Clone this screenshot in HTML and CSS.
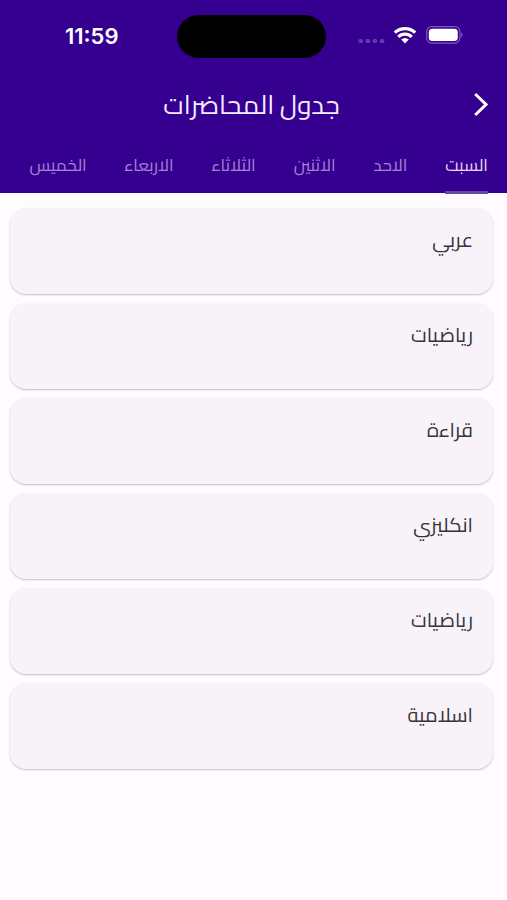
FILE: index.html
```html
<!DOCTYPE html>
<html lang="ar" dir="rtl">
<head>
<meta charset="utf-8">
<title>جدول المحاضرات</title>
<link rel="stylesheet" href="styles.css">
</head>
<body>
<header class="header">
  <div class="status" dir="ltr">
    <span class="time">11:59</span>
    <span class="island"></span>
    <div class="indicators">
      <svg class="dots" width="27" height="6" viewBox="0 0 27 6"><g fill="#6438ad"><rect x="0.5" y="1" width="4.5" height="4" rx="1.5"/><rect x="7.6" y="1" width="4.5" height="4" rx="1.5"/><rect x="14.7" y="1" width="4.5" height="4" rx="1.5"/><rect x="21.8" y="1" width="4.5" height="4" rx="1.5"/></g></svg>
      <svg class="wifi" width="24" height="18" viewBox="0 0 24 18"><g fill="none" stroke="#fff" stroke-width="3.2"><path d="M1.8 6.7A15 15 0 0 1 22.2 6.7"/><path d="M5.3 10.8A9.7 9.7 0 0 1 18.7 10.8"/></g><path d="M8.2 13.6Q12 10.5 15.8 13.6L12 17.4Z" fill="#fff"/></svg>
      <svg class="battery" width="38" height="18" viewBox="0 0 38 18"><rect x="0.7" y="0.7" width="33.2" height="16.4" rx="5" fill="none" stroke="#8059bf" stroke-width="1.2"/><rect x="2.8" y="2.8" width="29" height="12.2" rx="3.5" fill="#fff"/><path d="M35.4 6.3Q37.6 8.9 35.4 11.5Z" fill="#9b7bd0"/></svg>
    </div>
  </div>
  <div class="appbar">
    <svg class="back" width="16" height="26" viewBox="0 0 16 26"><path d="M2.2 2L13 12.5L2.2 23" fill="none" stroke="#fff" stroke-width="3"/></svg>
    <h1 class="title">جدول المحاضرات</h1>
  </div>
  <nav class="tabs">
    <a class="tab active t1"><span>السبت</span></a>
    <a class="tab t2"><span>الاحد</span></a>
    <a class="tab t3"><span>الاثنين</span></a>
    <a class="tab t4"><span>الثلاثاء</span></a>
    <a class="tab t5"><span>الاربعاء</span></a>
    <a class="tab t6"><span>الخميس</span></a>
  </nav>
</header>
<main class="list">
  <article class="card"><span>عربي</span></article>
  <article class="card"><span>رياضيات</span></article>
  <article class="card"><span>قراءة</span></article>
  <article class="card"><span>انكليزي</span></article>
  <article class="card"><span>رياضيات</span></article>
  <article class="card"><span>اسلامية</span></article>
</main>
</body>
</html>
```
FILE: styles.css
```css
* { box-sizing: border-box; }
body { margin: 0; height: 900px; overflow: hidden; background: #fffbff; font-family: "Cairo", "DejaVu Sans", sans-serif; }
.header { height: 193px; background: #35008f; color: #fff; }
.status { display: grid; grid-template-columns: 177px 149px 1fr; height: 72px; }
.time { padding: 22px 0 0 65px; font: 600 22px/28px Inter, sans-serif; }
.island { height: 43px; margin-top: 15px; border-radius: 22px; background: #000; }
.indicators { display: flex; padding: 26px 0 0 32px; }
.dots { margin-top: 12px; }
.wifi { margin-left: 8px; }
.battery { margin-left: 9px; }
.appbar { display: grid; grid-template-columns: 80px 1fr 80px; height: 65px; align-items: center; padding-right: 18px; margin-left: 14px; }
.title { margin: 0; text-align: center; font-size: 26px; font-weight: 400; white-space: nowrap; color: #f4eaff; }
.tabs { display: flex; gap: 37.7px; height: 57px; padding-right: 19px; }
.tab { height: 57px; padding-top: 15px; font-size: 17px; line-height: 26px; color: #a582d6; white-space: nowrap; display: flex; justify-content: center; }
.active { color: #e6d8fb; background: linear-gradient(#6548a8, #6548a8) bottom / 100% 3px no-repeat; border-radius: 3px 3px 0 0; }
.t1 { width: 43px; }
.t2 { width: 34px; }
.t3 { width: 42px; }
.t4 { width: 45px; }
.t5 { width: 49px; }
.t6 { width: 57px; }
.list { display: grid; gap: 9px; padding: 15px 14px 0 10px; }
.card { height: 86px; padding: 17px 20px 0; border-radius: 16px; background: #f7f3f9; box-shadow: 0 1px 2px rgba(0,0,0,.24); color: #37343b; font-size: 20px; line-height: 30px; }
```
